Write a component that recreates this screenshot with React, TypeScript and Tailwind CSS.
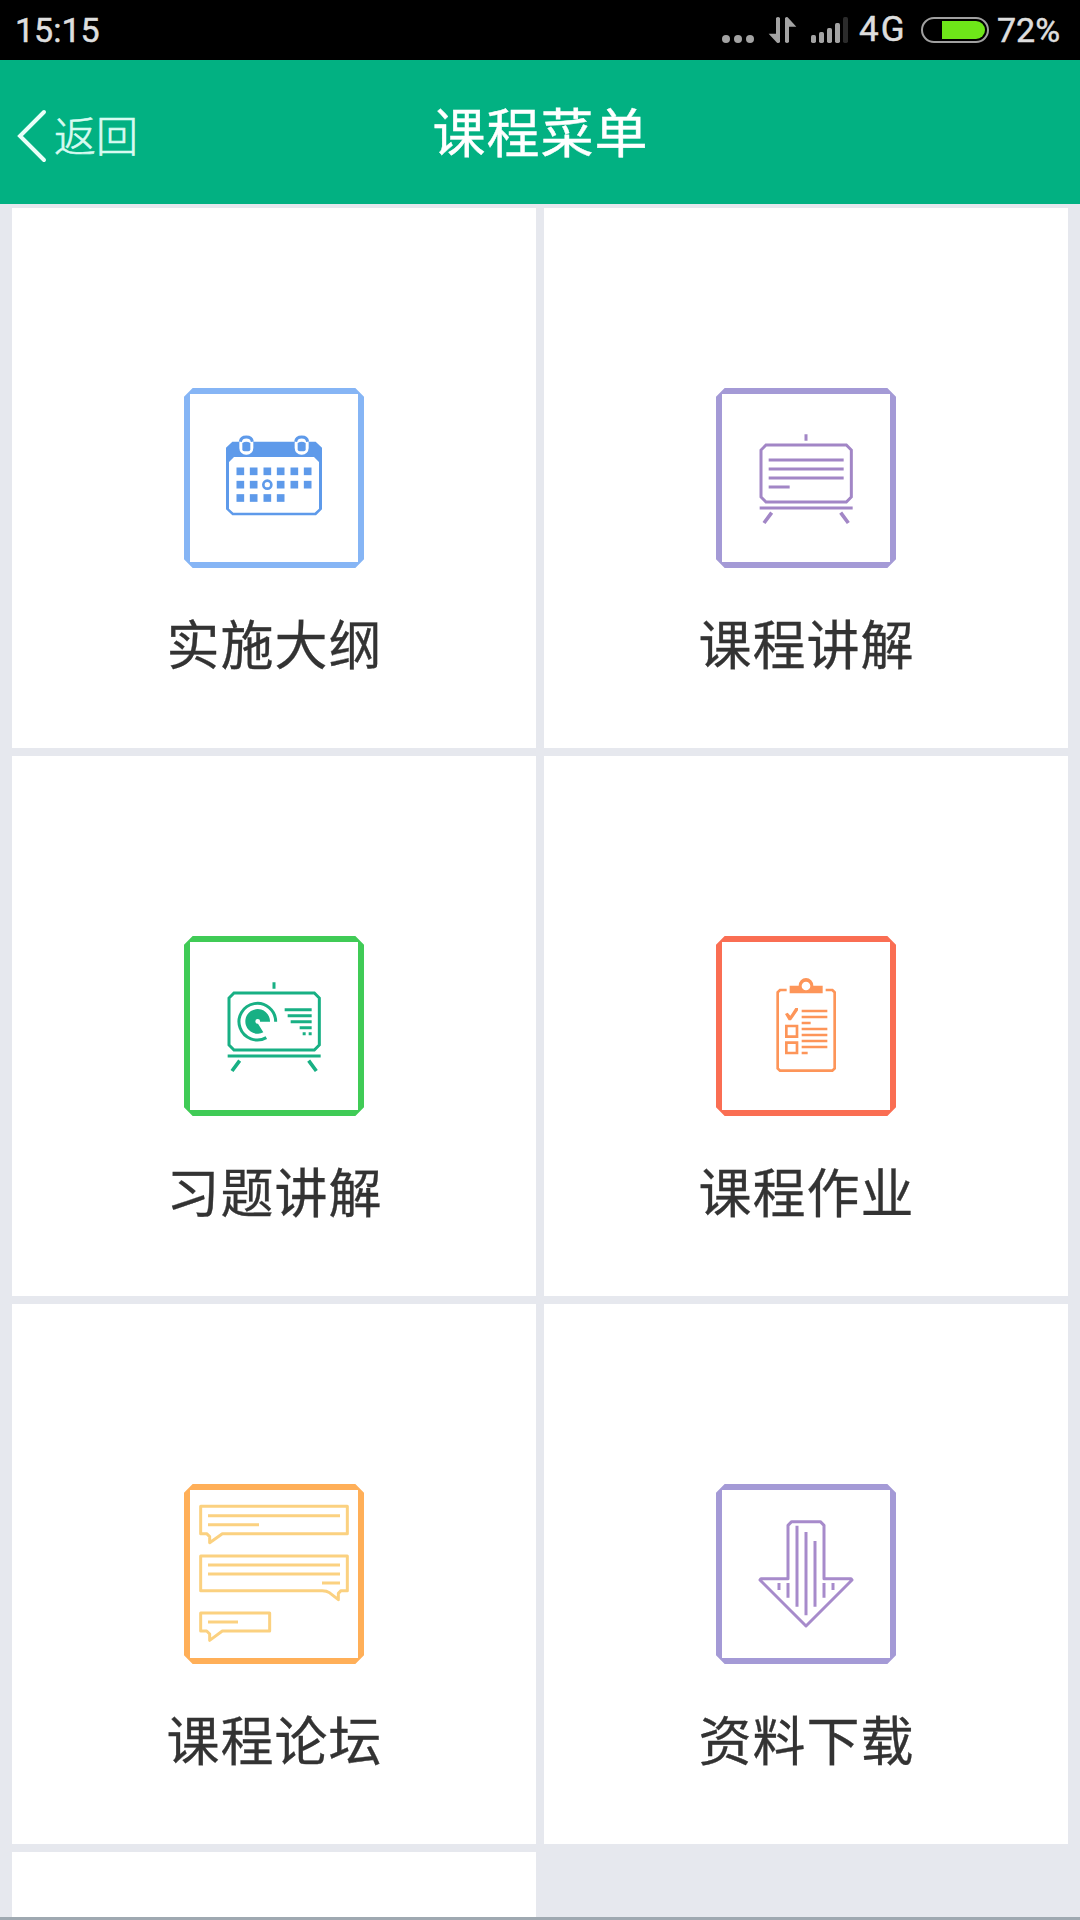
import React from "react";

const CALENDAR_DOTS = [
  [199, 280], [239, 280], [280, 280], [320, 280], [361, 280], [401, 280],
  [199, 320], [239, 320], [320, 320], [361, 320], [401, 320],
  [199, 360], [239, 360], [280, 360], [320, 360],
];

const SIGNAL_BARS = [
  { x: 333, y: 105, color: "#a3a3a3" },
  { x: 357, y: 96, color: "#a3a3a3" },
  { x: 381, y: 84, color: "#a3a3a3" },
  { x: 405, y: 69, color: "#a3a3a3" },
  { x: 429, y: 51, color: "#2b2b2b" },
];

// Square with cut corners, shared by every menu icon
function IconFrame({ color, children }: { color: string; children: React.ReactNode }) {
  return (
    <svg viewBox="30 30 540 540" className="h-[180px] w-[180px]" fill="none">
      <path
        fill={color}
        fillRule="evenodd"
        d="M56 30H544L570 56V544L544 570H56L30 544V56ZM48 48V552H552V48Z"
      />
      {children}
    </svg>
  );
}

function CalendarIcon() {
  return (
    <IconFrame color="#86b5f5">
      <path
        fill="#5e9aea"
        fillRule="evenodd"
        d="M175 191H425L444 209V394L426 412H175L156 394V209ZM180 237L165 252V392L178 404H422L435 392V252L420 237Z"
      />
      {[217, 383].map((x) => (
        <g key={x}>
          <rect x={x - 21} y="174" width="42" height="56" rx="20" fill="#fff" />
          <path d={`M${x - 18} 191Q${x - 16} 177 ${x} 177Q${x + 16} 177 ${x + 18} 191`} stroke="#5e9aea" strokeWidth="9" />
          <path fill="#5e9aea" d={`M${x - 12} 195Q${x} 187 ${x + 12} 195V214Q${x + 12} 220 ${x + 6} 220H${x - 6}Q${x - 12} 220 ${x - 12} 214Z`} />
        </g>
      ))}
      {CALENDAR_DOTS.map(([x, y]) => (
        <rect key={`${x}-${y}`} x={x - 11.5} y={y - 11.5} width="23" height="23" fill="#5e9aea" />
      ))}
      <circle cx="280" cy="320" r="12" stroke="#5e9aea" strokeWidth="8" />
    </IconFrame>
  );
}

function Board() {
  return (
    <>
      <path d="M300 169V188M161 390H440" />
      <path d="M180 201H421L436 216V357L421 372H180L165 357V216Z" />
      <path d="M197 404L174 435M404 404L427 435" strokeWidth="11" />
    </>
  );
}

function LectureIcon() {
  return (
    <IconFrame color="#a49ad6">
      <g stroke="#a286c6" strokeWidth="9">
        <Board />
        <path d="M188 246H413M188 273H413M188 300H413M188 327H251" />
      </g>
    </IconFrame>
  );
}

function ExerciseIcon() {
  return (
    <IconFrame color="#40cb56">
      <g stroke="#18b084" strokeWidth="9">
        <Board />
        <path d="M305 287A55 55 0 1 0 277 335" />
        <path d="M332 251H413M341 269H413M350 287H413M377 305H413M386 323H395M404 323H413" />
      </g>
      <path fill="#18b084" d="M288 287A37 37 0 1 0 268 319L252 293A7 7 0 1 1 258 287Z" />
    </IconFrame>
  );
}

function HomeworkIcon() {
  return (
    <IconFrame color="#fa6e53">
      <g stroke="#fd9559" strokeWidth="8">
        <path d="M242 192H222L215 199V427L222 434H379L386 427V199L379 192H359" />
        <path d="M287 255H364M287 273H364M287 291H314M287 309H364M287 327H364M287 345H364M287 363H364M287 381H305" />
        <path d="M241 300H273V332H241ZM241 350H273V381H241Z" />
      </g>
      <path
        fill="#fd9559"
        fillRule="evenodd"
        d="M251 179H278A22 23 0 0 1 322 179H350V202H251ZM300 167A13 13 0 1 0 300 193A13 13 0 1 0 300 167Z"
      />
      <path fill="#fd9559" d="M237 264L245 260L253 269L268 246H276V253L255 283H248Z" />
    </IconFrame>
  );
}

function ForumIcon() {
  return (
    <IconFrame color="#ffaf58">
      <g stroke="#fbd180" strokeWidth="9" strokeLinejoin="round">
        <path d="M80 97H520V179H145L107 206V188L98 179H80Z" />
        <path d="M102 125H498M102 152H255" />
        <path d="M80 246H520V350H501L493 358V377L466 356Q458 350 445 350H80Z" />
        <path d="M102 273H498M102 300H498M444 327H498" />
        <path d="M80 417H287V471H145L107 499V480L98 471H80Z" />
        <path d="M102 444H192" />
      </g>
    </IconFrame>
  );
}

function DownloadIcon() {
  return (
    <IconFrame color="#a49ad6">
      <g stroke="#a78bcb" strokeWidth="9">
        <path strokeLinejoin="round" d="M257 143H343L354 154V314H435L438 318L300 456L162 318L165 314H246V154Z" />
        <path d="M273 155V398M300 174V424M327 201V398M219 327V348M246 327V371M354 327V371M381 327V348" />
      </g>
    </IconFrame>
  );
}

const MENU_ITEMS = [
  { label: "实施大纲", Icon: CalendarIcon },
  { label: "课程讲解", Icon: LectureIcon },
  { label: "习题讲解", Icon: ExerciseIcon },
  { label: "课程作业", Icon: HomeworkIcon },
  { label: "课程论坛", Icon: ForumIcon },
  { label: "资料下载", Icon: DownloadIcon },
];

function StatusBar() {
  return (
    <div className="flex h-[60px] shrink-0 items-center justify-between bg-black pr-[17px] pl-[15px] font-['Roboto',sans-serif] text-[34px] leading-[60px] text-[#dedede] [-webkit-text-stroke:0.5px]">
      <span>15:15</span>
      <div className="flex items-center">
        {/* Dots, data arrows and signal strength */}
        <svg viewBox="66 0 378 180" className="mr-[11px] h-[60px] w-[126px]">
          {[78, 114, 150].map((x) => (
            <circle key={x} cx={x} cy="117" r="12" fill="#a3a3a3" />
          ))}
          <path
            fill="#a3a3a3"
            d="M228 54Q234 48 240 54V126Q237 130 231 128L206 101H228ZM255 54Q261 48 265 54L289 80H267V126Q261 132 255 126Z"
          />
          {SIGNAL_BARS.map((bar) => (
            <rect key={bar.x} x={bar.x} y={bar.y} width="15" height={129 - bar.y} rx="5" fill={bar.color} />
          ))}
        </svg>
        <span className="mr-4 w-[46px] text-[35px] tracking-[2px]">4G</span>
        <div className="mr-2 flex h-[26px] w-[68px] items-center justify-end rounded-full border-2 border-[#a0a0a0] pr-[2px]">
          <div className="h-[18px] w-[43px] rounded-r-full bg-[#6ee619]" />
        </div>
        <span className="w-[66px]">72%</span>
      </div>
    </div>
  );
}

export default function App() {
  return (
    <div className="flex h-[1920px] w-[1080px] flex-col overflow-hidden bg-[#e6e8ee] font-['Noto_Sans_CJK_SC',sans-serif]">
      <StatusBar />

      {/* Header */}
      <header className="grid h-36 shrink-0 grid-cols-[1fr_auto_1fr] items-center bg-[#02b182] text-white">
        <button className="flex items-center gap-[7px] pt-[7px] pl-[17px] text-left">
          <svg viewBox="0 0 30 54" className="h-[54px] w-[30px]" fill="none" stroke="#eafff9" strokeWidth="4">
            <path d="M27 3L3 27L27 51" strokeLinecap="round" />
          </svg>
          <span className="pb-1 text-[42px] leading-[50px] font-light text-[#d8fbf1] [-webkit-text-stroke:0.6px]">返回</span>
        </button>
        <h1 className="pb-1 pl-px text-[53px] leading-[72px] tracking-[1px] [-webkit-text-stroke:0.4px]">课程菜单</h1>
      </header>

      {/* Menu */}
      <main className="grid min-h-0 flex-1 auto-rows-[540px] grid-cols-2 gap-2 overflow-hidden px-3 pt-1">
        {MENU_ITEMS.map(({ label, Icon }) => (
          <div key={label} className="flex flex-col items-center bg-white pt-[180px]">
            <Icon />
            <span className="mt-[38px] pl-px text-[53px] leading-[72px] tracking-[1px] text-[#333] [-webkit-text-stroke:0.3px]">{label}</span>
          </div>
        ))}
        <div className="bg-white" />
      </main>
      <div className="h-[3px] shrink-0 bg-[#9fa9b1]" />
    </div>
  );
}
